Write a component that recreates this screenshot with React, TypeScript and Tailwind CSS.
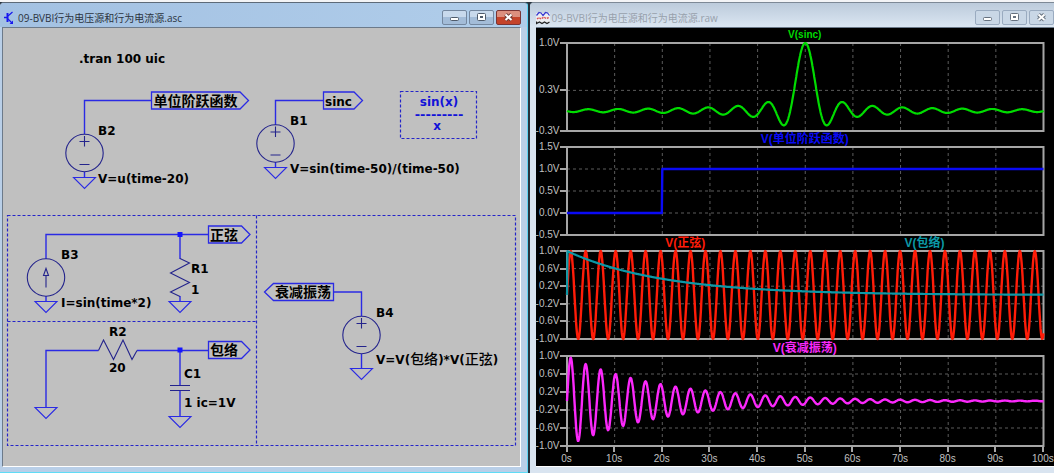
import type { ReactNode } from "react";

const WIRE = "#2a2ae4";
const SYMBOL = "#24248c";
const CJK = '"Noto Sans CJK SC", sans-serif';

/* ---------- Schematic symbols ---------- */

type Pt = { x: number; y: number };

function Wire({ d }: { d: string }) {
  return <path d={d} fill="none" stroke={WIRE} strokeWidth={1.4} />;
}

function Ground({ x, y }: Pt) {
  return <path d={`M${x - 11} ${y}h22l-11 11z`} fill="none" stroke={WIRE} strokeWidth={1.1} />;
}

function VoltageSource({ x, y }: Pt) {
  return (
    <g fill="none" stroke={SYMBOL} strokeWidth={1.1}>
      <circle cx={x} cy={y} r={18.7} />
      <path d={`M${x - 5} ${y - 11.5}h10M${x} ${y - 17}v10.5M${x - 5} ${y + 11.5}h10`} />
    </g>
  );
}

function CurrentSource({ x, y }: Pt) {
  return (
    <g fill="none" stroke={SYMBOL} strokeWidth={1.1}>
      <circle cx={x} cy={y} r={18.7} />
      <path d={`M${x} ${y + 10}v-12M${x} ${y - 9}l-2.5 7h5z`} />
    </g>
  );
}

function Junction({ x, y }: Pt) {
  return <rect x={x - 2.5} y={y - 2.5} width={5} height={5} fill="#1414ff" />;
}

function Label({ x, y, children, cjk = false }: Pt & { children: ReactNode; cjk?: boolean }) {
  return (
    <text
      x={x}
      y={y}
      className={cjk ? "fill-black text-[14px] font-bold" : "fill-black text-[12px] font-bold"}
      style={cjk ? { fontFamily: CJK } : undefined}
    >
      {children}
    </text>
  );
}

function Flag({ x, y, w, left = false }: Pt & { w: number; left?: boolean }) {
  const d = left
    ? `M${x} ${y}l9 -8.5h${w - 9}v17h${9 - w}z`
    : `M${x} ${y - 8.5}h${w - 8.5}l8.5 8.5l-8.5 8.5h${8.5 - w}z`;
  return <path d={d} fill="none" stroke={WIRE} strokeWidth={1.3} />;
}

function Schematic() {
  return (
    <svg className="h-full w-full" role="img" aria-label="Schematic" fontFamily='"DejaVu Sans", sans-serif'>
      <g transform="translate(-3 -28)">
        <Label x={79} y={63}>.tran 100 uic</Label>

        <Wire d="M84.5 134V100.5H151.5M84.5 172V177.5" />
        <Flag x={151.5} y={100.5} w={97} />
        <Label x={153.5} y={106} cjk>单位阶跃函数</Label>
        <VoltageSource x={84.5} y={153} />
        <Ground x={84.5} y={177.5} />
        <Label x={98} y={135}>B2</Label>
        <Label x={98} y={183}>V=u(time-20)</Label>

        <Wire d="M275.5 125V100.5H323.5M275.5 162V167.5" />
        <Flag x={323.5} y={100.5} w={39} />
        <Label x={325} y={106}>sinc</Label>
        <VoltageSource x={275.5} y={143.5} />
        <Ground x={275.5} y={167.5} />
        <Label x={290} y={125}>B1</Label>
        <Label x={290} y={173}>V=sin(time-50)/(time-50)</Label>

        <g fill="none" stroke="#2424c8" strokeWidth={1.2} strokeDasharray="3 2">
          <rect x={400.5} y={91.5} width={76} height={47} />
          <rect x={7.5} y={215.5} width={508} height={230} />
          <path d="M256.5 215.5V445.5M7.5 321.5H256.5" />
        </g>
        <text textAnchor="middle" className="fill-[#1212d8] text-[12px] font-bold">
          <tspan x={439} y={106}>sin(x)</tspan>
          <tspan x={439} y={119} className="text-[13px]">---------</tspan>
          <tspan x={437} y={130}>x</tspan>
        </text>

        <Wire d="M46 259V234.5H208.5M180 234.5V259M46 296V301.5M180 296V301.5" />
        <Flag x={208.5} y={234.5} w={41.5} />
        <Label x={210} y={240} cjk>正弦</Label>
        <Junction x={180} y={234.5} />
        <CurrentSource x={46} y={277.5} />
        <Ground x={46} y={301.5} />
        <Label x={61} y={259}>B3</Label>
        <Label x={61} y={307}>I=sin(time*2)</Label>
        <path d="M180 258.5L189.5 263L170.5 273L189.5 282.5L170.5 292L180 296.5" fill="none" stroke={SYMBOL} strokeWidth={1.1} />
        <Ground x={180} y={301.5} />
        <Label x={191} y={273}>R1</Label>
        <Label x={191} y={294}>1</Label>

        <Wire d="M46 407V350.5H98.5M137 350.5H208.5M180 350.5V385M180 391V416.5" />
        <Flag x={208.5} y={350} w={41.5} />
        <Label x={210} y={355} cjk>包络</Label>
        <Junction x={180} y={350} />
        <path d="M98.5 350.5L103.5 340L113.5 359.5L123 340L132 359.5L137 350.5M170 385.5H190M170 390.5H190" fill="none" stroke={SYMBOL} strokeWidth={1.1} />
        <Ground x={46} y={407.5} />
        <Ground x={180} y={416.5} />
        <Label x={109} y={336}>R2</Label>
        <Label x={109} y={372}>20</Label>
        <Label x={184} y={378}>C1</Label>
        <Label x={184} y={407}>1 ic=1V</Label>

        <Flag x={264.5} y={292} w={69} left />
        <Wire d="M333.5 292H361.5V316M361.5 354V368.5" />
        <Label x={275} y={297} cjk>衰减振荡</Label>
        <VoltageSource x={361.5} y={335} />
        <Ground x={361.5} y={368.5} />
        <Label x={376} y={317}>B4</Label>
        <Label x={376} y={364}>
          V=V(<tspan className="text-[14px] font-medium" style={{ fontFamily: CJK }}>包络</tspan>)*V(
          <tspan className="text-[14px] font-medium" style={{ fontFamily: CJK }}>正弦</tspan>)
        </Label>
      </g>
    </svg>
  );
}

/* ---------- Waveform plots ---------- */

type Trace = { name: string; color: string; cls: string; width: number; f: (t: number) => number };
type PlotSpec = { min: number; max: number; ticks: number[]; traces: Trace[]; tall?: boolean };

const sinc = (t: number) => (t === 50 ? 1 : Math.sin(t - 50) / (t - 50));
const env = (t: number) => (t === 0 ? 0 : Math.exp(-t / 20));
const SWING = [1, 0.6, 0.2, -0.2, -0.6, -1];

const PLOTS: PlotSpec[] = [
  { min: -0.3, max: 1, ticks: [1, 0.3, -0.3], traces: [{ name: "V(sinc)", color: "#00dc00", cls: "text-[10px] text-[#00dc00]", width: 2.2, f: sinc }] },
  { min: -0.5, max: 1.5, ticks: [1.5, 1, 0.5, 0, -0.5], traces: [{ name: "V(单位阶跃函数)", color: "#0a0af5", cls: "text-[12px] text-[#0a0af5]", width: 2.4, f: (t) => (t >= 20 ? 1 : 0) }] },
  {
    min: -1, max: 1, ticks: SWING,
    traces: [
      { name: "V(正弦)", color: "#ff1c08", cls: "text-[12px] text-[#ff1c08]", width: 2.4, f: (t) => Math.sin(2 * t) },
      { name: "V(包络)", color: "#0c98a6", cls: "text-[12px] text-[#0c98a6]", width: 2.2, f: env },
    ],
  },
  { min: -1, max: 1, ticks: SWING, tall: true, traces: [{ name: "V(衰减振荡)", color: "#fb28fb", cls: "text-[12px] text-[#fb28fb]", width: 2.4, f: (t) => Math.exp(-t / 20) * Math.sin(2 * t) }] },
];

const DECADES = [0, 10, 20, 30, 40, 50, 60, 70, 80, 90, 100];

function PlotArea({ spec }: { spec: PlotSpec }) {
  const h = spec.tall ? 92 : 90;
  const px = (t: number) => 1 + t * 4.76;
  const py = (v: number) => 1 + ((spec.max - v) / (spec.max - spec.min)) * (h - 2);
  const line = (f: (t: number) => number) => {
    const pts: string[] = [];
    for (let i = 0; i <= 1000; i++) pts.push(`${px(i / 10).toFixed(1)},${py(f(i / 10)).toFixed(1)}`);
    return pts.join(" ");
  };
  return (
    <svg viewBox={`0 0 478 ${h}`} preserveAspectRatio="none" className="block h-full w-full overflow-visible" aria-hidden="true">
      <g stroke="#5c5c5c" strokeWidth={1} strokeDasharray="3 3">
        {DECADES.slice(1, -1).map((t) => (
          <line key={t} x1={px(t)} x2={px(t)} y1={1} y2={h - 1} vectorEffect="non-scaling-stroke" />
        ))}
        {spec.ticks.slice(1, -1).map((v) => (
          <line key={v} x1={1} x2={477} y1={py(v)} y2={py(v)} vectorEffect="non-scaling-stroke" />
        ))}
      </g>
      <rect x={1} y={1} width={476} height={h - 2} fill="none" stroke="#a6a6a6" strokeWidth={2} vectorEffect="non-scaling-stroke" />
      {spec.traces.map((t) => (
        <polyline key={t.name} points={line(t.f)} fill="none" stroke={t.color} strokeWidth={t.width} strokeLinejoin="round" vectorEffect="non-scaling-stroke" />
      ))}
    </svg>
  );
}

function YAxis({ spec }: { spec: PlotSpec }) {
  return (
    <div className="flex w-[30px] shrink-0 flex-col py-px">
      {spec.ticks.map((v, i) => (
        <div key={v} className="flex min-h-0 flex-col" style={{ flex: i === 0 ? "0 0 0px" : `${spec.ticks[i - 1] - v} 1 0px` }}>
          <div className="mt-auto flex h-0 items-center justify-end">
            <span>{v.toFixed(1)}V</span>
            <span className="h-0.5 w-1.5 bg-[#a6a6a6]" />
          </div>
        </div>
      ))}
    </div>
  );
}

function Waveforms() {
  return (
    <div className="flex-1 bg-black pr-2.5 font-['Liberation_Sans','Noto_Sans_CJK_SC',sans-serif] text-[10px] leading-none text-[#c0c0c0]">
      {PLOTS.map((spec) => (
        <section key={spec.traces[0].name}>
          <h2 className={`flex items-center justify-around pl-[30px] font-bold ${spec.tall ? "h-[15px]" : "h-3.5"}`}>
            {spec.traces.map((t) => (
              <span key={t.name} className={t.cls}>{t.name}</span>
            ))}
          </h2>
          <div className={`flex ${spec.tall ? "h-[92px]" : "h-[90px]"}`}>
            <YAxis spec={spec} />
            <div className="min-w-0 flex-1">
              <PlotArea spec={spec} />
            </div>
          </div>
        </section>
      ))}
      <div className="flex justify-between pr-px pl-[31px]">
        {DECADES.map((t) => (
          <div key={t} className="flex w-0 flex-col items-center gap-0.5">
            <span className="h-[5px] w-0.5 bg-[#a6a6a6]" />
            <span>{t}s</span>
          </div>
        ))}
      </div>
    </div>
  );
}

/* ---------- Window chrome ---------- */

function Glyph({ kind, light }: { kind: string; light: boolean }) {
  const edge = light ? "#66717f" : "#4f5b6b";
  return (
    <svg width="13" height="11" viewBox="0 0 13 11" aria-hidden="true">
      {kind === "min" && <rect x="2.5" y="5.5" width="8" height="3" rx="1" fill="#fff" stroke={edge} />}
      {kind === "max" && (
        <>
          <rect x="2.5" y="1.5" width="8" height="7" rx="1" fill="#fff" stroke={edge} />
          <rect x="5" y="4" width="3" height="2" fill={edge} />
        </>
      )}
      {kind === "close" && (
        <>
          <path d="M3.5 2.5L9.5 8M9.5 2.5L3.5 8" stroke={light ? edge : "#6e3a35"} strokeWidth="4" />
          <path d="M3.5 2.5L9.5 8M9.5 2.5L3.5 8" stroke="#fff" strokeWidth="2" />
        </>
      )}
    </svg>
  );
}

function Controls({ light }: { light: boolean }) {
  const base = "flex h-[15px] w-[25px] items-center justify-center rounded-[2px] border";
  const plain = light
    ? "border-[#9aabc0] bg-[#c9d7e6]"
    : "border-[#74879f] bg-linear-to-b from-[#c8d9ec] from-50% to-[#a3bcd8] to-50%";
  const close = light ? plain : "border-[#7a3434] bg-linear-to-b from-[#dc8f7e] from-45% to-[#c4432a] to-50%";
  return (
    <div className="flex gap-0.5 pt-[7px]">
      <button type="button" aria-label="Minimize" className={`${base} ${plain}`}><Glyph kind="min" light={light} /></button>
      <button type="button" aria-label="Maximize" className={`${base} ${plain}`}><Glyph kind="max" light={light} /></button>
      <button type="button" aria-label="Close" className={`${base} ${close}`}><Glyph kind="close" light={light} /></button>
    </div>
  );
}

function TitleText({ ext }: { ext: string }) {
  return (
    <h1 className="font-['Open_Sans','Noto_Sans_CJK_SC',sans-serif] text-[10px] leading-none whitespace-nowrap">
      09-BVBI行为电压源和行为电流源.{ext}
    </h1>
  );
}

function TransistorIcon() {
  return (
    <svg width="10" height="14" viewBox="0 0 10 14" fill="none" stroke="#1818ee" aria-hidden="true">
      <path d="M0 6.5h3" strokeWidth="1.5" />
      <path d="M3.5 2v9" strokeWidth="2" />
      <path d="M4 5L8.5 1M4 8l4.5 4.5" strokeWidth="1.2" />
      <path d="M9 13V9.5L5.5 13z" fill="#1818ee" stroke="none" />
    </svg>
  );
}

function WaveIcon() {
  return (
    <svg width="14" height="14" viewBox="0 0 14 14" fill="none" aria-hidden="true">
      <rect y="2" width="14" height="10" fill="#eceef2" />
      <path d="M0.5 4.5L3 1.5L5 2L7 4.5L9.5 1.5L11.500 2L13.5 4.5" stroke="#3636d0" strokeWidth="1.2" />
      <path d="M1 8l2-1.5l2 1.500l3-2l2 1.5l3-1" stroke="#dc5050" strokeWidth="1.4" strokeDasharray="2 1" />
      <path d="M0.5 10.500V12.500L3.5 11L6 12.500L8.5 11L11 12.500L13.5 11" stroke="#222" strokeWidth="1.3" />
    </svg>
  );
}

export default function App() {
  return (
    <main className="flex min-h-screen flex-col bg-[#f3f4f6]">
      <div className="h-0.5" />
      <div className="flex flex-1 bg-[#26333f]">
        <section className="flex min-w-0 flex-1 flex-col rounded-t border-t border-r border-b border-t-[#5d6a78] border-r-[#5fd3f3] border-b-[#5fdcf6] bg-[#b9cfe8] pr-1.5 pl-0.5">
          <header className="-mr-1.5 -ml-0.5 flex h-6 justify-between rounded-t bg-linear-to-r from-[#a3c1e2] to-[#b0cdea] pr-1.5 pl-1">
            <div className="flex items-center gap-1 pt-1.5 text-[#2c3440]">
              <TransistorIcon />
              <TitleText ext="asc" />
            </div>
            <Controls light={false} />
          </header>
          <div className="mb-[5px] flex-1 border-t border-r border-b border-l border-t-[#6c7a8a] border-r-white border-b-white border-l-[#6c7a8a] bg-[#c0c0c0]">
            <Schematic />
          </div>
        </section>
        <section className="ml-0.5 flex min-w-0 flex-1 flex-col rounded-tl border-t border-[#7d8996] bg-[#d9e4f0] pl-1.5">
          <header className="-ml-1.5 flex h-6 justify-between rounded-tl bg-linear-to-b from-[#bccbdb] to-[#dbe6f2] pl-1.5">
            <div className="flex items-center gap-0.5 pt-1.5 text-[#98a1ac]">
              <WaveIcon />
              <TitleText ext="raw" />
            </div>
            <Controls light />
          </header>
          <div className="mb-1.5 flex flex-1 flex-col border-t border-b border-t-[#6c7a8a] border-b-white">
            <Waveforms />
          </div>
        </section>
      </div>
    </main>
  );
}
